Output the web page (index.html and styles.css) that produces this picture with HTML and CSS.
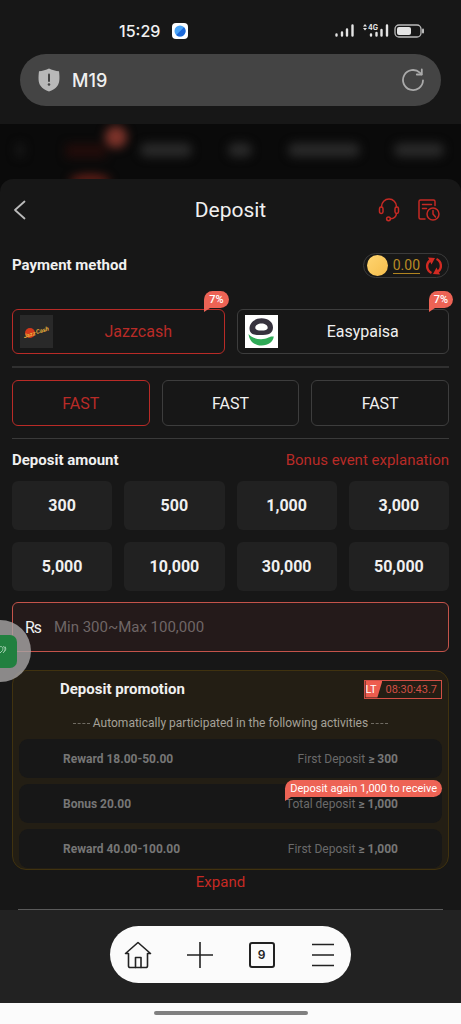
FILE: index.html
```html
<!DOCTYPE html>
<html lang="en">
<head>
    <meta charset="UTF-8">
    <meta name="viewport" content="width=device-width, initial-scale=1.0">
    <title>Deposit</title>
    <link rel="stylesheet" href="styles.css">
</head>
<body>
    <div class="status-bar">
        <div class="status-left">
            <span class="time">15:29</span>
            <svg width="16" height="16" viewBox="0 0 16 16">
                <rect width="16" height="16" rx="4" fill="#fff"/>
                <circle cx="8" cy="8" r="5.5" fill="#4aa3f5"/>
                <path d="M4.2 12 12 4.2A5.5 5.5 0 0 1 4.2 12z" fill="#1c68d8"/>
            </svg>
        </div>
        <svg width="90" height="16" viewBox="0 0 90 16">
            <g stroke="#e4e4e4" stroke-width="2.4" stroke-linecap="round">
                <path d="M1.500 12.500v-1M7 12.500V9.500M12 12.500V6.500M17.500 12.500V2.500"/>
                <path d="M36 12.500v-1M41.500 12.500V10M46.500 12.500V7M52 12.500V2.500"/>
            </g>
            <path d="M28 3.500l2-2.500 2 2.500zM28 5l2 2.500 2-2.500z" fill="#e4e4e4"/>
            <text x="33" y="7" class="net-label">4G</text>
            <rect x="60" y="2" width="26" height="12" rx="4" fill="none" stroke="#bbb" stroke-width="1.3"/>
            <rect x="62" y="4" width="14" height="8" rx="2" fill="#e4e4e4"/>
            <path d="M88 6.500v3" stroke="#bbb" stroke-width="2" stroke-linecap="round"/>
        </svg>
    </div>
    <div class="address-bar">
        <svg width="22" height="24" viewBox="0 0 22 24">
            <path d="M11 0.500C13.500 2 18 3 21 3.200c.8 6.500.8 11.300-1.500 14.500-2 2.800-5 4.500-8.500 5.800-3.500-1.300-6.500-3-8.500-5.800C.2 14.500.2 9.700 1 3.200 4 3 8.500 2 11 .5z" fill="#b8b8b8"/>
            <path d="M11 6.500v6.500" stroke="#444" stroke-width="2" stroke-linecap="round"/>
            <circle cx="11" cy="16.500" r="1.3" fill="#444"/>
        </svg>
        <span class="site">M19</span>
        <button class="icon-btn" aria-label="Reload">
            <svg width="24" height="24" viewBox="0 0 24 24" fill="none" stroke="#aaa" stroke-width="1.8" stroke-linecap="round" stroke-linejoin="round">
                <path d="M22 12.500a10 10 0 1 1-3.200-7.800L20.500 6.300"/>
                <path d="M20.800 1.500v5h-5"/>
            </svg>
        </button>
    </div>

    <div class="backdrop">
        <span class="blur blur-menu"></span>
        <span class="blur blur-active"></span>
        <span class="blur blur-w1"></span>
        <span class="blur blur-w2"></span>
        <span class="blur blur-w3"></span>
        <span class="blur blur-w4"></span>
    </div>

    <main class="sheet">
        <header class="sheet-header">
            <button class="icon-btn back" aria-label="Back">
                <svg width="16" height="20" viewBox="0 0 16 20" fill="none" stroke="#bbb" stroke-width="1.8" stroke-linecap="round" stroke-linejoin="round">
                    <path d="M12.500 1.500 3 10l9.500 8.500"/>
                </svg>
            </button>
            <h1>Deposit</h1>
            <div class="header-actions">
                <button class="icon-btn" aria-label="Customer service">
                    <svg width="22" height="24" viewBox="0 0 22 24" fill="none" stroke="#c62a24" stroke-width="1.5" stroke-linecap="round">
                        <path d="M3.500 9V8.500a7.500 7.500 0 0 1 15 0V9"/>
                        <rect x="1.500" y="9" width="3.500" height="6.500" rx="1.700"/>
                        <rect x="17" y="9" width="3.500" height="6.500" rx="1.700"/>
                        <path d="M18.500 15.500c-.3 3-2.500 5-6 5.300"/>
                        <circle cx="10.500" cy="20.800" r="1.900"/>
                    </svg>
                </button>
                <button class="icon-btn" aria-label="Deposit record">
                    <svg width="22" height="24" viewBox="0 0 22 24" fill="none" stroke="#c62a24" stroke-width="1.5" stroke-linecap="round" stroke-linejoin="round">
                        <path d="M17 7.500V3.500a1.500 1.500 0 0 0-1.500-1.500h-13A1.500 1.500 0 0 0 1 3.500v16A1.500 1.500 0 0 0 2.500 21H7"/>
                        <path d="M4.500 6.500h9M4.500 10.500h4"/>
                        <circle cx="15" cy="16" r="6"/>
                        <path d="M15 12.500V16l2.500 3"/>
                    </svg>
                </button>
            </div>
        </header>

        <div class="row">
            <h2>Payment method</h2>
            <div class="balance">
                <span class="coin"></span>
                <span class="amount">0.00</span>
                <button class="icon-btn" aria-label="Refresh balance">
                    <svg width="18" height="18" viewBox="0 0 18 18" fill="none" stroke="#d22a22" stroke-width="2.4">
                        <path d="M6.500 16A7.300 7.300 0 0 1 5 3.500"/>
                        <path d="M11.500 2A7.300 7.300 0 0 1 13 14.500"/>
                        <path d="M3 0.500l7 .5-3.500 6.500zM15 17.500l-7-.5 3.500-6.500z" fill="#d22a22" stroke="none"/>
                    </svg>
                </button>
            </div>
        </div>

        <div class="methods">
            <button class="option active">
                <svg class="logo" width="33" height="33" viewBox="0 0 33 33">
                    <rect width="33" height="33" fill="#292929"/>
                    <circle cx="10" cy="18" r="5" fill="#d3381c"/>
                    <g transform="rotate(-15 16 17)">
                        <text x="3" y="20" class="logo-text">Jazz</text>
                        <text x="16" y="19" class="logo-text">Cash</text>
                    </g>
                </svg>
                <span class="name">Jazzcash</span>
                <span class="badge">7%</span>
            </button>
            <button class="option">
                <svg class="logo" width="33" height="33" viewBox="0 0 33 33">
                    <rect width="33" height="33" fill="#fff"/>
                    <path d="M16.500 3.300c7 0 11.500 4 11.500 9.200 0 2.500-1 4.500-3 6-3 1.500-12.500 2.500-17.500.5-2-1-3-3-3-5.500 0-5.500 5-10.200 12-10.200zm0 5.200c-3.500 0-6.200 1.700-6.200 4.200 0 2 2.700 2.800 6.200 2.800s6.200-.8 6.200-2.800c0-2.500-2.700-4.200-6.200-4.200z" fill="#36323e" fill-rule="evenodd"/>
                    <path d="M3.500 19c4 5.500 14.500 6.500 20 3.500 1.500-.8 3-1.300 5.300-1C28 27 23.500 30.500 16.500 30.500S4.500 26.500 3.500 19z" fill="#2faa57"/>
                </svg>
                <span class="name">Easypaisa</span>
                <span class="badge">7%</span>
            </button>
        </div>

        <div class="channels">
            <button class="option active">FAST</button>
            <button class="option">FAST</button>
            <button class="option">FAST</button>
        </div>

        <div class="row amount-title">
            <h2>Deposit amount</h2>
            <a href="#">Bonus event explanation</a>
        </div>

        <div class="amounts">
            <button>300</button>
            <button>500</button>
            <button>1,000</button>
            <button>3,000</button>
            <button>5,000</button>
            <button>10,000</button>
            <button>30,000</button>
            <button>50,000</button>
        </div>

        <div class="amount-field">
            <label for="amount">₨</label>
            <input type="text" id="amount" name="amount" placeholder="Min 300~Max 100,000">
            <button class="floating" aria-label="Assistant">
                <svg width="62" height="62" viewBox="0 0 62 62">
                    <circle cx="31" cy="31" r="31" fill="#a9a6a6" fill-opacity="0.8"/>
                    <rect x="14" y="15" width="34" height="33" rx="7" fill="#21803f"/>
                    <path d="M29 28c3-3 6-1 4.500 2.500L30 34M34 26.500c3 1 2.500 4 0 6.500M36 26.500c1.500 2 .5 4-.5 5" fill="none" stroke="#9ccdaa"/>
                </svg>
            </button>
        </div>

        <section class="promo">
            <div class="promo-head">
                <h2>Deposit promotion</h2>
                <div class="timer"><span class="lt">LT</span><span>08:30:43.7</span></div>
            </div>
            <p class="promo-note">Automatically participated in the following activities</p>
            <ul>
                <li><b>Reward 18.00-50.00</b><span>First Deposit <b>≥ 300</b></span></li>
                <li>
                    <b>Bonus 20.00</b><span>Total deposit <b>≥ 1,000</b></span>
                    <span class="badge hint">Deposit again 1,000 to receive</span>
                </li>
                <li><b>Reward 40.00-100.00</b><span>First Deposit <b>≥ 1,000</b></span></li>
            </ul>
        </section>
        <button class="expand">Expand</button>
    </main>

    <footer class="bottom">
        <nav class="browser-nav">
            <button class="icon-btn" aria-label="Home">
                <svg width="28" height="28" viewBox="0 0 28 28" fill="none" stroke="#222" stroke-width="1.6" stroke-linejoin="round" stroke-linecap="round">
                    <path d="M4.500 12.500h-3L14 1.500l12.500 11h-3V25a1.500 1.500 0 0 1-1.500 1.500H6A1.500 1.500 0 0 1 4.500 25z"/>
                    <path d="M11.500 26.500v-10h5.500v10"/>
                </svg>
            </button>
            <button class="icon-btn" aria-label="New tab">
                <svg width="28" height="28" viewBox="0 0 28 28" stroke="#222" stroke-width="1.6"><path d="M14 1v26M1 14h26"/></svg>
            </button>
            <button class="icon-btn tabs" aria-label="Tabs">9</button>
            <button class="icon-btn" aria-label="Menu">
                <svg width="28" height="28" viewBox="0 0 28 28" stroke="#222" stroke-width="1.6"><path d="M3 3.500h22M3 14h22M3 24.500h22"/></svg>
            </button>
        </nav>
    </footer>
    <div class="gesture"><span></span></div>
</body>
</html>
```
FILE: styles.css
```css
* {
    box-sizing: border-box;
}
body {
    display: flex;
    flex-direction: column;
    min-height: 100vh;
    margin: 0;
    font-family: Roboto, sans-serif;
    font-size: 16px;
    background-color: #171717;
    color: #f0f0f0;
    overflow-x: hidden;
}
button {
    padding: 0;
    border: none;
    background: none;
    color: inherit;
    font: inherit;
    cursor: pointer;
}
svg {
    display: block;
}
h1, h2, p, ul {
    margin: 0;
    padding: 0;
}
h2 {
    font-size: 15px;
    line-height: 20px;
    font-weight: 700;
}
a {
    color: #b92b27;
    text-decoration: none;
}
.icon-btn {
    display: flex;
    align-items: center;
    justify-content: center;
}

/* browser chrome */
.status-bar {
    display: flex;
    justify-content: space-between;
    align-items: center;
    height: 54px;
    padding: 8px 36px 0 119px;
}
.status-left {
    display: flex;
    align-items: center;
    gap: 12px;
}
.time {
    font-family: Inter, sans-serif;
    font-size: 16px;
    font-weight: 500;
}
.net-label {
    font-family: Inter, sans-serif;
    font-size: 7px;
    font-weight: 700;
    fill: #e4e4e4;
}
.address-bar {
    display: flex;
    align-items: center;
    gap: 12px;
    height: 52px;
    margin: 0 20px 18px;
    padding: 0 16px 0 18px;
    border-radius: 26px;
    background-color: #444;
}
.address-bar .icon-btn {
    margin-left: auto;
}
.site {
    font-family: Inter, sans-serif;
    font-size: 18px;
    font-weight: 500;
}

/* dimmed page behind the sheet */
.backdrop {
    display: flex;
    align-items: center;
    height: 68px;
    margin-bottom: -13px;
    padding: 0 16px 16px;
    background-color: #0a0a0a;
    overflow: hidden;
}
.blur {
    flex-shrink: 0;
    height: 14px;
    border-radius: 7px;
    background-color: #292929;
    filter: blur(5px);
}
.blur-menu {
    width: 8px;
    background-color: #181818;
}
.blur-active {
    align-self: flex-start;
    width: 62px;
    height: 60px;
    margin-left: 42px;
    border-radius: 0;
    background: radial-gradient(circle at 50px 13px, #7c332a 10px, transparent 12px), radial-gradient(ellipse 22px 7px at 24px 57px, #6b2118 80%, transparent), linear-gradient(#220c0a, #220c0a) 0 20px / 40px 14px no-repeat;
}
.blur-w1 {
    width: 52px;
    margin-left: 12px;
}
.blur-w2 {
    width: 24px;
    margin-left: 36px;
}
.blur-w3 {
    width: 72px;
    margin-left: 36px;
}
.blur-w4 {
    width: 50px;
    margin-left: 34px;
}

/* deposit sheet */
.sheet {
    position: relative;
    flex: 1;
    padding: 0 12px 16px;
    border-radius: 13px 13px 0 0;
    background-color: #171717;
}
.sheet-header {
    display: grid;
    grid-template-columns: 1fr auto 1fr;
    align-items: center;
    height: 62px;
}
.sheet-header h1 {
    font-size: 21px;
    line-height: 24px;
    font-weight: 400;
}
.back {
    justify-self: start;
}
.header-actions {
    display: flex;
    justify-content: flex-end;
    gap: 18px;
    padding-right: 9px;
}
.row {
    display: flex;
    justify-content: space-between;
    align-items: center;
}
.balance {
    display: flex;
    align-items: center;
    gap: 5px;
    height: 25px;
    margin: 12px 0 11px;
    padding: 0 5px 0 3px;
    border: 1px solid #3a3a3a;
    border-radius: 13px;
}
.coin {
    width: 21px;
    height: 21px;
    border-radius: 50%;
    background: linear-gradient(135deg, #ffd570, #f5bd4c);
}
.amount {
    border-bottom: 1px solid #b08420;
    font-size: 14px;
    line-height: 16px;
    color: #b98b25;
}
.option {
    border: 1px solid #3d3d3d;
    border-radius: 6px;
}
.option.active {
    border-color: #b92b27;
    color: #b92b27;
}
.methods {
    display: grid;
    grid-template-columns: 1fr 1fr;
    gap: 12px;
    padding: 20px 0 12px;
    border-bottom: 2px solid #303030;
}
.methods .option {
    position: relative;
    display: flex;
    align-items: center;
    height: 45px;
    padding-left: 7px;
}
.logo-text {
    font-size: 6px;
    font-weight: 700;
    font-style: italic;
    fill: #e8b03a;
}
.name {
    flex: 1;
}
.badge {
    position: absolute;
    top: -19px;
    right: -5px;
    padding: 0 5px;
    border-radius: 9px 9px 9px 0;
    background-color: #ed6355;
    color: #fff;
    font-size: 11px;
    line-height: 17px;
    font-weight: 500;
}
.badge::after {
    content: "";
    position: absolute;
    left: 0;
    top: 100%;
    border-top: 4px solid #ed6355;
    border-right: 6px solid transparent;
}
.channels {
    display: grid;
    grid-template-columns: repeat(3, 1fr);
    gap: 12px;
    padding: 12px 0;
    border-bottom: 1px solid #3a3a3a;
}
.channels .option {
    height: 46px;
}
.amount-title {
    height: 42px;
}
.amount-title a {
    font-size: 15px;
}
.amounts {
    display: grid;
    grid-template-columns: repeat(4, 1fr);
    gap: 12px;
}
.amounts button {
    height: 49px;
    border-radius: 6px;
    background-color: #212121;
    font-weight: 700;
}
.amount-field {
    position: relative;
    display: flex;
    align-items: center;
    gap: 12px;
    height: 50px;
    margin: 11px 0 18px;
    padding: 0 12px;
    border: 1px solid #c4534a;
    border-radius: 6px;
    background-color: #241a1a;
}
.amount-field input {
    flex: 1;
    min-width: 0;
    padding: 0;
    border: none;
    outline: none;
    background: none;
    color: inherit;
    font: inherit;
    font-size: 15px;
}
.amount-field input::placeholder {
    color: #6f6666;
    opacity: 1;
}
.floating {
    position: absolute;
    left: -44px;
    top: 17px;
    z-index: 1;
}

/* promotion */
.promo {
    border: 1px solid #40320f;
    border-radius: 14px;
    padding: 8px 6px 1px;
    background-color: #231e14;
}
.promo-head {
    display: flex;
    justify-content: space-between;
    align-items: center;
    padding-left: 41px;
}
.timer {
    display: flex;
    align-items: center;
    gap: 3px;
    height: 19px;
    border: 1px solid #d14f45;
    padding-right: 4px;
    font-size: 11px;
    line-height: 17px;
    color: #d14f45;
}
.lt {
    width: 17px;
    background-color: #ed5c4e;
    color: #fff;
    clip-path: polygon(0 0, 100% 0, 70% 100%, 0 100%);
}
.promo-note {
    display: flex;
    justify-content: center;
    align-items: center;
    gap: 3px;
    height: 40px;
    padding-top: 8px;
    font-size: 12px;
    color: #a5a198;
}
.promo-note::before,
.promo-note::after {
    content: "";
    width: 17px;
    border-top: 1px dashed #6f6b62;
}
.promo ul {
    display: grid;
    gap: 6px;
    list-style: none;
}
.promo li {
    position: relative;
    display: flex;
    justify-content: space-between;
    align-items: center;
    height: 39px;
    padding: 0 44px;
    border-radius: 9px;
    background-color: #171717;
    font-size: 12px;
    color: #6a6a6a;
}
.promo b {
    font-weight: 700;
    color: #767676;
}
.promo .hint {
    top: -4px;
    right: 0;
    font-weight: 400;
}
.expand {
    display: block;
    margin: 2px auto 0;
    padding-right: 20px;
    font-size: 15px;
    line-height: 20px;
    color: #c62a24;
}

/* bottom bar */
.bottom {
    display: flex;
    justify-content: center;
    padding: 16px 0 20px;
    background-color: #222;
    position: relative;
}
.bottom::before {
    content: "";
    position: absolute;
    top: -1px;
    left: 18px;
    right: 18px;
    border-top: 1px solid #5a5a5a;
}
.browser-nav {
    display: flex;
    align-items: center;
    justify-content: space-between;
    width: 241px;
    height: 57px;
    padding: 0 14px;
    border-radius: 29px;
    background-color: #fbfbfb;
}
.tabs {
    width: 26px;
    height: 26px;
    border: 2px solid #222;
    border-radius: 3px;
    color: #222;
    font-family: Inter, sans-serif;
    font-size: 12px;
    font-weight: 600;
}
.gesture {
    display: flex;
    justify-content: center;
    padding: 8px 0 9px;
    background-color: #fbfbfb;
}
.gesture span {
    width: 154px;
    height: 4px;
    border-radius: 2px;
    background-color: #808080;
}
```
